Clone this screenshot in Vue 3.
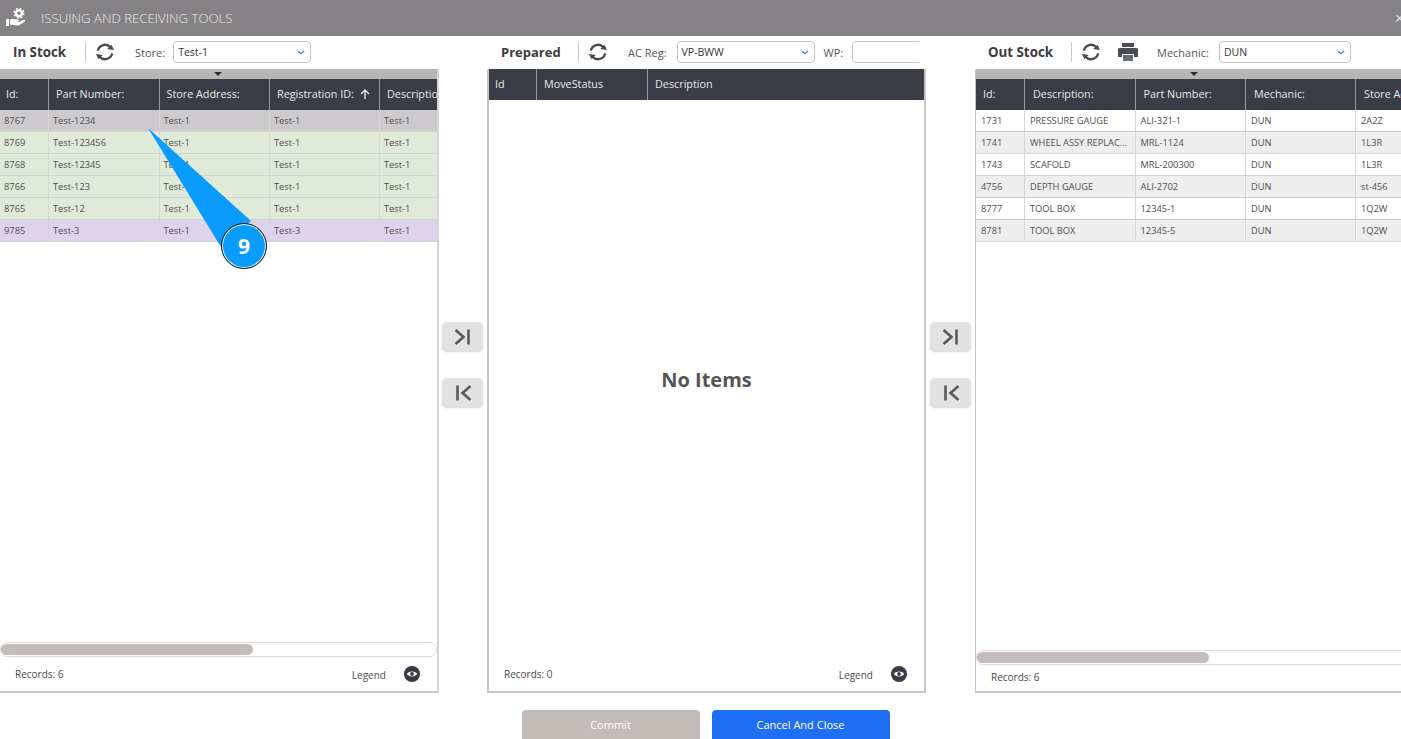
<script setup>
const leftCols = ['49px', '110.5px', '110.5px', '110px', '110px']
const leftHead = ['Id:', 'Part Number:', 'Store Address:', 'Registration ID:', 'Description:']
const leftRows = [
  { tone: 'sel', cells: ['8767', 'Test-1234', 'Test-1', 'Test-1', 'Test-1'] },
  { tone: 'green', cells: ['8769', 'Test-123456', 'Test-1', 'Test-1', 'Test-1'] },
  { tone: 'green', cells: ['8768', 'Test-12345', 'Test-1', 'Test-1', 'Test-1'] },
  { tone: 'green', cells: ['8766', 'Test-123', 'Test-1', 'Test-1', 'Test-1'] },
  { tone: 'green', cells: ['8765', 'Test-12', 'Test-1', 'Test-1', 'Test-1'] },
  { tone: 'purple', cells: ['9785', 'Test-3', 'Test-1', 'Test-3', 'Test-1'] }
]
const rightHead = ['Id:', 'Description:', 'Part Number:', 'Mechanic:', 'Store Address:']
const rightRows = [
  { tone: 'white', cells: ['1731', 'PRESSURE GAUGE', 'ALI-321-1', 'DUN', '2A2Z'] },
  { tone: 'grey', cells: ['1741', 'WHEEL ASSY REPLAC...', 'MRL-1124', 'DUN', '1L3R'] },
  { tone: 'white', cells: ['1743', 'SCAFOLD', 'MRL-200300', 'DUN', '1L3R'] },
  { tone: 'grey', cells: ['4756', 'DEPTH GAUGE', 'ALI-2702', 'DUN', 'st-456'] },
  { tone: 'white', cells: ['8777', 'TOOL BOX', '12345-1', 'DUN', '1Q2W'] },
  { tone: 'grey', cells: ['8781', 'TOOL BOX', '12345-5', 'DUN', '1Q2W'] }
]
const gridStyle = { gridTemplateColumns: leftCols.join(' ') }
</script>

<template>
  <div class="page">
    <header class="titlebar">
      <svg class="title-icon" viewBox="0 0 22 19" width="22" height="19">
        <circle cx="13" cy="5.200" r="3" fill="none" stroke="#fff" stroke-width="2.400"/>
        <circle cx="13" cy="5.200" r="4.800" fill="none" stroke="#fff" stroke-width="1.400" stroke-dasharray="2 1.770"/>
        <path d="M0 11h3v7H0z" fill="#fff"/>
        <path d="M4 11.800c1.800-1.300 3.500-1.300 5-.500l3 .500c1.200.200 1.200 1.800 0 1.900l-3 .200 3.600.200 4.900-2.300c1.500-.500 2.300 1 1 1.900l-5 3.400c-.700.500-1.500.500-2.300.400L4 16.400z" fill="#fff"/>
      </svg>
      <span class="title-text">ISSUING AND RECEIVING TOOLS</span>
      <span class="close">✕</span>
    </header>

    <main class="columns">
      <!-- In Stock -->
      <section class="col col-left">
        <div class="toolbar tb-left">
          <h2 class="tb-title t-left">In Stock</h2>
          <i class="divider"></i>
          <svg class="refresh" viewBox="0 0 24 24" width="22" height="22"><path d="M4.200 10.500A8 8 0 0 1 18 6.800" fill="none" stroke="#4a4a4a" stroke-width="2.600"/><path d="M14.800 9.200h7.400L18.600 4z" fill="#4a4a4a" transform="rotate(8 18 7)"/><path d="M19.800 13.500A8 8 0 0 1 6 17.200" fill="none" stroke="#4a4a4a" stroke-width="2.600"/><path d="M9.200 14.800H1.800L5.400 20z" fill="#4a4a4a" transform="rotate(8 6 17)"/></svg>
          <label class="tb-label l-store">Store:</label>
          <div class="select s-store"><span>Test-1</span><svg viewBox="0 0 10 6" width="8" height="5"><path d="M1 1l4 3.500L9 1" fill="none" stroke="#2d70e0" stroke-width="1.500"/></svg></div>
        </div>
        <div class="panel panel-left">
          <div class="strip"><i class="tri"></i></div>
          <div class="table">
            <div class="row head" :style="gridStyle">
              <div v-for="(h, i) in leftHead" :key="h" class="hcell" :class="{ first: i === 0 }">
                {{ h }}
                <svg v-if="i === 3" class="sort" viewBox="0 0 12 12" width="12" height="12"><path d="M6 11V2M2 6l4-4 4 4" fill="none" stroke="#e8e8e8" stroke-width="1.400"/></svg>
              </div>
            </div>
            <div v-for="r in leftRows" :key="r.cells[0]" class="row body" :class="r.tone" :style="gridStyle">
              <div v-for="(c, i) in r.cells" :key="i" class="cell" :class="{ first: i === 0 }">{{ c }}</div>
            </div>
          </div>
          <div class="scroll sc-left"><i class="thumb th-left"></i></div>
          <footer class="foot foot-left">
            <span class="rec">Records: 6</span>
            <span class="legend">Legend</span>
            <svg class="eye" viewBox="0 0 16 16" width="16" height="16"><circle cx="8" cy="8" r="8" fill="#383b44"/><path d="M2.800 8C5 4.800 11 4.800 13.200 8 11 11.200 5 11.200 2.800 8z" fill="#fff"/><circle cx="8" cy="8" r="1.900" fill="#383b44"/></svg>
          </footer>
        </div>
      </section>

      <div class="arrows arrows-first">
        <button class="arrow"><svg viewBox="0 0 24 20" width="24" height="20"><path d="M4.500 3l8 7-8 7M17.500 2.500v15" fill="none" stroke="#5a5a5a" stroke-width="2.600"/></svg></button>
        <button class="arrow"><svg viewBox="0 0 24 20" width="24" height="20"><path d="M19.500 3l-8 7 8 7M6.500 2.500v15" fill="none" stroke="#5a5a5a" stroke-width="2.600"/></svg></button>
      </div>

      <!-- Prepared -->
      <section class="col col-mid">
        <div class="toolbar tb-mid">
          <h2 class="tb-title t-mid">Prepared</h2>
          <i class="divider"></i>
          <svg class="refresh" viewBox="0 0 24 24" width="22" height="22"><path d="M4.200 10.500A8 8 0 0 1 18 6.800" fill="none" stroke="#4a4a4a" stroke-width="2.600"/><path d="M14.800 9.200h7.400L18.600 4z" fill="#4a4a4a" transform="rotate(8 18 7)"/><path d="M19.800 13.500A8 8 0 0 1 6 17.200" fill="none" stroke="#4a4a4a" stroke-width="2.600"/><path d="M9.200 14.800H1.800L5.400 20z" fill="#4a4a4a" transform="rotate(8 6 17)"/></svg>
          <label class="tb-label l-ac">AC Reg:</label>
          <div class="select s-ac"><span>VP-BWW</span><svg viewBox="0 0 10 6" width="8" height="5"><path d="M1 1l4 3.500L9 1" fill="none" stroke="#2d70e0" stroke-width="1.500"/></svg></div>
          <label class="tb-label l-wp">WP:</label>
          <div class="wp-input"></div>
        </div>
        <div class="panel panel-mid">
          <div class="mid-head">
            <div class="mh m1">Id</div>
            <div class="mh m2">MoveStatus</div>
            <div class="mh m3">Description</div>
          </div>
          <div class="empty">No Items</div>
          <footer class="foot foot-mid">
            <span class="rec">Records: 0</span>
            <span class="legend">Legend</span>
            <svg class="eye" viewBox="0 0 16 16" width="16" height="16"><circle cx="8" cy="8" r="8" fill="#383b44"/><path d="M2.800 8C5 4.800 11 4.800 13.200 8 11 11.200 5 11.200 2.800 8z" fill="#fff"/><circle cx="8" cy="8" r="1.900" fill="#383b44"/></svg>
          </footer>
        </div>
        <div class="actions">
          <button class="btn commit">Commit</button>
          <button class="btn cancel">Cancel And Close</button>
        </div>
      </section>

      <div class="arrows">
        <button class="arrow"><svg viewBox="0 0 24 20" width="24" height="20"><path d="M4.500 3l8 7-8 7M17.500 2.500v15" fill="none" stroke="#5a5a5a" stroke-width="2.600"/></svg></button>
        <button class="arrow"><svg viewBox="0 0 24 20" width="24" height="20"><path d="M19.500 3l-8 7 8 7M6.500 2.500v15" fill="none" stroke="#5a5a5a" stroke-width="2.600"/></svg></button>
      </div>

      <!-- Out Stock -->
      <section class="col col-right">
        <div class="toolbar tb-right">
          <h2 class="tb-title t-right">Out Stock</h2>
          <i class="divider"></i>
          <svg class="refresh" viewBox="0 0 24 24" width="22" height="22"><path d="M4.200 10.500A8 8 0 0 1 18 6.800" fill="none" stroke="#4a4a4a" stroke-width="2.600"/><path d="M14.800 9.200h7.400L18.600 4z" fill="#4a4a4a" transform="rotate(8 18 7)"/><path d="M19.800 13.500A8 8 0 0 1 6 17.200" fill="none" stroke="#4a4a4a" stroke-width="2.600"/><path d="M9.200 14.800H1.800L5.400 20z" fill="#4a4a4a" transform="rotate(8 6 17)"/></svg>
          <svg class="printer" viewBox="0 0 20 18" width="20" height="18"><path d="M4 0h12v4H4z" fill="#4a4d55"/><path d="M1.500 5h17A1.500 1.500 0 0 1 20 6.500V14h-4v-3H4v3H0V6.500A1.500 1.500 0 0 1 1.500 5z" fill="#4a4d55"/><path d="M5 12h10v6H5z" fill="#6a6d74"/></svg>
          <label class="tb-label l-mech">Mechanic:</label>
          <div class="select s-mech"><span>DUN</span><svg viewBox="0 0 10 6" width="8" height="5"><path d="M1 1l4 3.500L9 1" fill="none" stroke="#2d70e0" stroke-width="1.500"/></svg></div>
        </div>
        <div class="panel panel-right">
          <div class="strip"><i class="tri"></i></div>
          <div class="table">
            <div class="row head" :style="gridStyle">
              <div v-for="(h, i) in rightHead" :key="h" class="hcell" :class="{ first: i === 0 }">{{ h }}</div>
            </div>
            <div v-for="r in rightRows" :key="r.cells[0]" class="row body" :class="r.tone" :style="gridStyle">
              <div v-for="(c, i) in r.cells" :key="i" class="cell" :class="{ first: i === 0 }">{{ c }}</div>
            </div>
          </div>
          <div class="scroll sc-right"><i class="thumb th-right"></i></div>
          <footer class="foot foot-right">
            <span class="rec">Records: 6</span>
          </footer>
        </div>
      </section>
    </main>

    <svg class="callout-tail" viewBox="0 0 140 140" width="140" height="140"><path d="M8 8L111 101 81 127z" fill="#0a9bff"/></svg>
    <div class="callout">9</div>
  </div>
</template>

<style>
html, body { margin: 0; overflow: hidden; background: #fff; }
</style>

<style scoped>
.page {
  position: relative;
  width: 1401px;
  height: 739px;
  overflow: hidden;
  background: #fff;
  font-family: "Open Sans", "Noto Sans", sans-serif;
  color: #444;
}
.titlebar {
  height: 36px;
  box-sizing: border-box;
  background: #848284;
  display: flex;
  align-items: center;
  padding-left: 6px;
}
.title-icon { margin-top: -1px; flex: none; }
.title-text {
  margin-left: 13px;
  font-size: 13.200px;
  font-weight: 300;
  color: #eaeaea;
}
.close {
  margin-left: auto;
  margin-right: -4px;
  color: #d8d8d8;
  font-size: 13px;
}
.columns { display: flex; height: 703px; }
.col { display: flex; flex-direction: column; flex: none; min-width: 0; }
.col-left { width: 439px; }
.col-mid { width: 439px; }
.col-right { flex: 1; overflow: hidden; }
.toolbar {
  height: 33px;
  flex: none;
  box-sizing: border-box;
  display: flex;
  align-items: center;
  overflow: hidden;
  white-space: nowrap;
  padding-bottom: 1px;
}
.tb-left { padding-left: 13px; }
.tb-mid { padding-left: 14px; width: 432px; }
.tb-right { padding-left: 13px; }
.tb-title { margin: 1px 0 0; font-size: 13.300px; font-weight: 700; color: #3c3c3c; line-height: 1; flex: none; }
.t-left { width: 72px; }
.t-mid { width: 77px; font-size: 13px; }
.t-right { width: 83px; }
.divider { width: 1px; height: 20px; background: #c8c8c8; margin: 0 7.500px 0 0; flex: none; }
.refresh { flex: none; }
.printer { flex: none; margin-left: 16.500px; }
.tb-label { font-size: 11px; color: #555; flex: none; }
.l-store { margin-left: 19.500px; }
.l-ac { margin-left: 19.500px; }
.l-wp { margin-left: 9px; }
.l-mech { margin-left: 19px; }
.select {
  flex: none;
  height: 22px;
  box-sizing: border-box;
  border: 1px solid #c9c5c2;
  border-radius: 4px;
  background: #fff;
  display: flex;
  align-items: center;
  justify-content: space-between;
  padding: 0 5px 0 4px;
  font-size: 10.500px;
  color: #333;
}
.s-store { width: 138px; margin-left: 8px; }
.s-ac { width: 138px; margin-left: 10px; }
.s-mech { width: 132px; margin-left: 10px; }
.wp-input {
  width: 80px;
  height: 22px;
  flex: none;
  box-sizing: border-box;
  border: 1px solid #c9c5c2;
  border-radius: 4px;
  margin-left: 9px;
}
.panel {
  height: 624px;
  flex: none;
  box-sizing: border-box;
  display: flex;
  flex-direction: column;
  overflow: hidden;
  background: #fff;
  border-bottom: 2px solid #c9c5c2;
}
.panel-left { border-right: 2px solid #d5d5d5; }
.panel-mid { border: 2px solid #c9c5c2; border-top: 0; }
.panel-right { border-left: 1px solid #c9c5c2; width: 440px; }
.strip {
  height: 10px;
  flex: none;
  background: #b6b6b6;
  position: relative;
  width: 100%;
}
.tri {
  position: absolute;
  left: 214px;
  top: 3px;
  border-left: 4px solid transparent;
  border-right: 4px solid transparent;
  border-top: 4px solid #2c2c2c;
}
.table { flex: 1; min-height: 0; overflow: hidden; }
.row { display: grid; width: 500px; }
.head { height: 31px; background: #3a3d46; }
.hcell {
  box-sizing: border-box;
  padding-left: 7px;
  padding-bottom: 2px;
  font-size: 10.800px;
  line-height: 28px;
  color: #e8e8e8;
  border-right: 1px solid #9a9a9a;
  white-space: nowrap;
  overflow: hidden;
  display: flex;
  align-items: center;
  gap: 5px;
}
.hcell.first { padding-left: 6px; }
.sort { margin-top: 1px; flex: none; }
.body { height: 22px; box-sizing: border-box; border-bottom: 1px solid #d2d2d2; }
.cell {
  box-sizing: border-box;
  padding-left: 4px;
  font-size: 9.300px;
  line-height: 21px;
  color: #4e4e4e;
  border-right: 1px solid #d6d6d6;
  white-space: nowrap;
  overflow: hidden;
}
.cell.first { padding-left: 4px; }
.panel-right .cell { padding-left: 5px; }
.panel-right .hcell { padding-left: 8px; }
.panel-right .hcell.first { padding-left: 7px; }
.sel { background: #cdcacd; }
.green { background: #dfebd8; }
.purple { background: #ddd3ec; }
.white { background: #fff; }
.grey { background: #eee; }
.scroll {
  flex: none;
  height: 15px;
  box-sizing: border-box;
  border: 1px solid #dedcdc;
  border-radius: 7px;
  padding: 1px 0;
  background: #fff;
}
.thumb { display: block; height: 100%; border-radius: 6px; background: #c4bcbb; }
.th-left { width: 252px; }
.th-right { width: 232px; }
.foot {
  flex: none;
  box-sizing: border-box;
  display: flex;
  align-items: center;
  font-size: 10px;
  color: #4a4a4a;
}
.foot-left { height: 34px; padding: 0 17px 0 15px; }
.foot-mid { height: 34px; padding: 0 17px 0 15px; }
.foot-right { height: 26px; padding: 0 0 2px 15px; }
.legend { margin-left: auto; margin-right: 18px; margin-top: 1px; }
.empty {
  flex: 1;
  display: flex;
  align-items: center;
  justify-content: center;
  font-size: 20px;
  font-weight: 700;
  color: #555;
  padding-top: 6px;
  padding-bottom: 4px;
}
.mid-head { display: flex; height: 31px; background: #3a3d46; flex: none; color: #e8e8e8; font-size: 10.800px; }
.mh { box-sizing: border-box; line-height: 30px; border-right: 1px solid #9a9a9a; padding-left: 6px; }
.m1 { width: 48px; }
.m2 { width: 111px; padding-left: 7px; }
.m3 { flex: 1; padding-left: 7px; border-right: 0; }
.arrows {
  width: 49px;
  flex: none;
  box-sizing: border-box;
  padding: 286px 0 0 4px;
  display: flex;
  flex-direction: column;
  gap: 27px;
}
.arrows-first { width: 48px; padding-left: 3px; }
.arrow {
  width: 41px;
  height: 29px;
  padding: 0;
  border: 0;
  border-radius: 5px;
  background: #e2e2e2;
  box-shadow: 0 1px 2px rgba(0, 0, 0, 0.18);
  display: flex;
  align-items: center;
  justify-content: center;
}
.actions { display: flex; justify-content: center; gap: 12px; padding-top: 17px; padding-right: 2px; }
.btn {
  width: 178px;
  height: 32px;
  border: 0;
  border-radius: 4px;
  color: #fff;
  font-family: inherit;
  font-size: 11px;
  padding: 0 0 3px;
  flex: none;
}
.commit { background: #c4bcb9; }
.cancel { background: #1f6ff5; }
.callout-tail { position: absolute; left: 140px; top: 120px; }
.callout {
  position: absolute;
  left: 221px;
  top: 223px;
  width: 46px;
  height: 46px;
  box-sizing: border-box;
  border-radius: 50%;
  background: #0a9bff;
  border: 1px solid #111;
  box-shadow: inset 0 0 0 1px #fff;
  color: #fff;
  font-size: 21px;
  font-weight: 700;
  text-align: center;
  line-height: 44px;
}
</style>
